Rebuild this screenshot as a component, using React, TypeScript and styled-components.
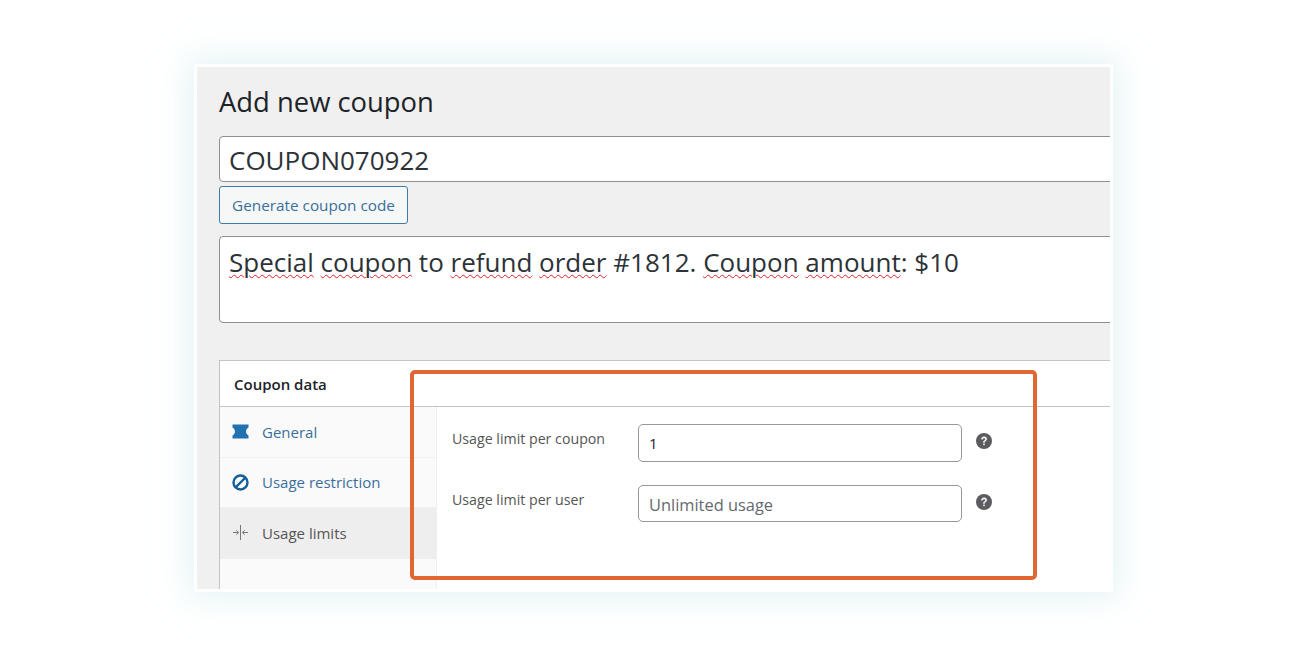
import React from 'react'
import styled, { createGlobalStyle } from 'styled-components'

const GlobalStyle = createGlobalStyle`
  html, body {
    margin: 0;
    padding: 0;
    background: #fff;
    font-family: 'Open Sans', 'Noto Sans', sans-serif;
  }
`

const tabs = [
  { id: 'general', label: 'General', Icon: TicketIcon },
  { id: 'restriction', label: 'Usage restriction', Icon: BanIcon },
  { id: 'limits', label: 'Usage limits', Icon: LimitIcon, active: true }
]

function TicketIcon() {
  return (
    <svg width="17" height="15" viewBox="0 0 17 15">
      <path
        d="M0.5 0.5H16.5V3.5C15 4.4 14 5.7 14 7.5C14 9.3 15 10.6 16.5 11.5V14.5H0.5V11.5C2 10.6 3 9.3 3 7.5C3 5.7 2 4.4 0.5 3.5Z"
        fill="#2271b1"
      />
    </svg>
  )
}

function BanIcon() {
  return (
    <svg width="17" height="17" viewBox="0 0 17 17">
      <circle cx="8.5" cy="8.5" r="7" fill="none" stroke="#135e96" strokeWidth="2.4" />
      <path d="M4 13L13 4" stroke="#135e96" strokeWidth="2.4" />
    </svg>
  )
}

function LimitIcon() {
  return (
    <svg width="17" height="17" viewBox="0 0 17 17">
      <path d="M8.5 1V16" stroke="#77767c" strokeWidth="1" />
      <path d="M1 8.5H6.5M4.3 6.3L6.7 8.5L4.3 10.7M16 8.5H10.5M12.7 6.3L10.3 8.5L12.7 10.7" fill="none" stroke="#77767c" strokeWidth="1" />
    </svg>
  )
}

const Help = () => (
  <HelpMark viewBox="0 0 15 15">
    <circle cx="7.5" cy="7.5" r="7.5" fill="#5c5b60" />
    <path
      d="M5 5.8C5.1 4.3 6.2 3.5 7.6 3.5C9 3.5 10.1 4.3 10.1 5.6C10.1 6.6 9.5 7.1 8.8 7.6C8.2 8 8 8.3 8 9H6.9C6.9 8 7.2 7.5 8 7C8.6 6.6 8.9 6.3 8.9 5.7C8.9 5 8.3 4.6 7.6 4.6C6.8 4.6 6.3 5.1 6.2 5.8Z"
      fill="#fff"
      stroke="#fff"
      strokeWidth="0.4"
    />
    <rect x="6.8" y="9.9" width="1.4" height="1.5" fill="#fff" />
  </HelpMark>
)

const App: React.FC = () => {
  return (
    <>
      <GlobalStyle />
      <Page>
        <Card>
          <Title>Add new coupon</Title>
          <CodeField>COUPON070922</CodeField>
          <GenerateButton>Generate coupon code</GenerateButton>
          <Description>
            <Misspelled>Special</Misspelled> <Misspelled>coupon</Misspelled> to{' '}
            <Misspelled>refund</Misspelled> <Misspelled>order</Misspelled> #1812.{' '}
            <Misspelled>Coupon</Misspelled> <Misspelled>amount</Misspelled>: $10
          </Description>
          <Panel>
            <PanelHead>Coupon data</PanelHead>
            <PanelBody>
              <TabList>
                {tabs.map(({ id, label, Icon, active }) => (
                  <Tab key={id} $active={active}>
                    <TabIcon>
                      <Icon />
                    </TabIcon>
                    {label}
                  </Tab>
                ))}
              </TabList>
              <FieldList>
                <FieldRow>
                  <FieldLabel>Usage limit per coupon</FieldLabel>
                  <FieldInput>1</FieldInput>
                  <Help />
                </FieldRow>
                <FieldRow>
                  <FieldLabel>Usage limit per user</FieldLabel>
                  <FieldInput $placeholder>Unlimited usage</FieldInput>
                  <Help />
                </FieldRow>
              </FieldList>
            </PanelBody>
          </Panel>
        </Card>
        <Highlight />
      </Page>
    </>
  )
}

const Page = styled.div`
  position: relative;
  width: 1300px;
  height: 652px;
  padding: 64px 0 0 194px;
  box-sizing: border-box;
  overflow: hidden;
  background: #fff;
`

const Card = styled.div`
  width: 919px;
  height: 528px;
  box-sizing: border-box;
  padding: 16px 0 0 22px;
  overflow: hidden;
  background: #f0f0f1;
  border: 3px solid #fff;
  box-shadow: 0 0 30px 6px rgba(205, 233, 240, 0.55);
`

const Title = styled.h1`
  margin: 0;
  height: 53px;
  font-size: 27.4px;
  line-height: 38px;
  font-weight: 400;
  color: #1d2327;
`

const CodeField = styled.div`
  width: 1000px;
  height: 46px;
  box-sizing: border-box;
  padding-left: 9px;
  background: #fff;
  border: 1px solid #8c8f94;
  border-radius: 4px;
  font-size: 26px;
  line-height: 47px;
  color: #2c3338;
`

const GenerateButton = styled.button`
  display: block;
  width: 189px;
  height: 38px;
  margin-top: 4px;
  padding: 0;
  background: #f6f7f7;
  border: 1px solid #3f7ba8;
  border-radius: 3px;
  font-family: inherit;
  font-size: 15.3px;
  color: #3a6f9c;
`

const Description = styled.div`
  width: 1000px;
  height: 87px;
  margin-top: 12px;
  box-sizing: border-box;
  padding-left: 9px;
  background: #fff;
  border: 1px solid #8c8f94;
  border-radius: 4px;
  font-size: 26px;
  line-height: 50px;
  color: #2c3338;
`

const Misspelled = styled.span`
  text-decoration: underline wavy #e0202a 1px;
  text-underline-offset: 2px;
`

const Panel = styled.div`
  width: 1000px;
  height: 300px;
  margin-top: 37px;
  background: #fff;
  border: 1px solid #c3c4c7;
`

const PanelHead = styled.div`
  height: 46px;
  box-sizing: border-box;
  padding-left: 14px;
  border-bottom: 1px solid #c3c4c7;
  font-size: 15px;
  font-weight: 600;
  line-height: 46px;
  color: #1d2327;
`

const PanelBody = styled.div`
  display: flex;
  height: 253px;
`

const TabList = styled.ul`
  width: 217px;
  margin: 0;
  padding: 0;
  box-sizing: border-box;
  list-style: none;
  background: #fafafa;
  border-right: 1px solid #eee;
`

const Tab = styled.li<{ $active?: boolean }>`
  display: flex;
  align-items: center;
  height: 50.5px;
  box-sizing: border-box;
  padding-left: 12px;
  background: ${p => (p.$active ? '#eee' : 'transparent')};
  border-bottom: 1px solid ${p => (p.$active ? '#eee' : '#f1f1f1')};
  font-size: 15px;
  color: ${p => (p.$active ? '#555' : '#3a6f9c')};
`

const TabIcon = styled.span`
  display: flex;
  justify-content: center;
  width: 17px;
  margin-right: 13px;
`

const FieldList = styled.div`
  display: flex;
  flex-direction: column;
  gap: 23px;
  padding: 17px 0 0 15px;
`

const FieldRow = styled.div`
  display: flex;
  align-items: center;
  height: 37.5px;
`

const FieldLabel = styled.label`
  width: 186px;
  margin-top: -8px;
  font-size: 14.2px;
  color: #555;
`

const FieldInput = styled.div<{ $placeholder?: boolean }>`
  width: 324px;
  height: 100%;
  box-sizing: border-box;
  padding-left: 10px;
  background: #fff;
  border: 1px solid #999;
  border-radius: 5px;
  font-size: ${p => (p.$placeholder ? '16.4px' : '15px')};
  line-height: 37px;
  color: ${p => (p.$placeholder ? '#646970' : '#1d2327')};
`

const HelpMark = styled.svg`
  width: 16px;
  height: 16px;
  margin: -3px 0 0 14px;
`

const Highlight = styled.div`
  position: absolute;
  left: 410px;
  top: 370px;
  width: 627px;
  height: 210px;
  box-sizing: border-box;
  border: 4px solid #e16631;
  border-radius: 5px;
`

export default App
